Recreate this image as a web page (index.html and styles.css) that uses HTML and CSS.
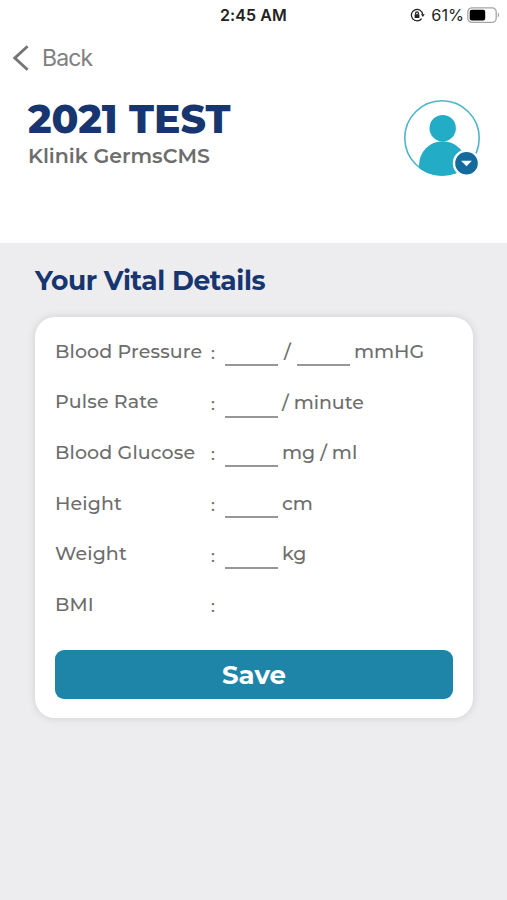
FILE: index.html
```html
<!DOCTYPE html>
<html lang="en">
<head>
<meta charset="utf-8">
<meta name="viewport" content="width=device-width, initial-scale=1">
<title>Your Vital Details</title>
<link rel="stylesheet" href="styles.css">
</head>
<body>
<header class="top">
  <div class="status">
    <span class="time">2:45 AM</span>
    <div class="indicators">
      <svg class="lock" width="16" height="14" viewBox="0 0 16 14" fill="none" stroke="#222" stroke-width="1.3">
        <path d="M11.6 10.6A5.7 5.7 0 1 1 12.7 6.6"/>
        <path d="M11 6.3h3.8l-1.9 2.6z" fill="#222" stroke="none"/>
        <rect x="4.6" y="6.3" width="4.8" height="3.8" rx=".5" fill="#222" stroke="none"/>
        <path d="M5.6 6.5V5.2a1.4 1.4 0 0 1 2.8 0v1.3"/>
      </svg>
      <span class="percent">61%</span>
      <svg class="battery" width="33" height="17" viewBox="0 0 33 17">
        <rect x=".8" y=".8" width="28.4" height="14.6" rx="4.2" fill="#fff" stroke="#a6a6a6" stroke-width="1.3"/>
        <rect x="2.7" y="2.8" width="15.5" height="10.6" rx="2" fill="#000"/>
        <path d="M30.8 5.6c1.7.7 1.7 4.2 0 4.9z" fill="#a6a6a6"/>
      </svg>
    </div>
  </div>
  <nav class="back">
    <svg width="17" height="28" viewBox="0 0 17 28" fill="none" stroke="#757575" stroke-width="2.9"><path d="M15.6 2.2 2.8 14l12.8 11.8"/></svg>
    <span>Back</span>
  </nav>
  <div class="profile">
    <div class="names">
      <h1>2021 TEST</h1>
      <p>Klinik GermsCMS</p>
    </div>
    <svg class="avatar" width="78" height="78" viewBox="0 0 78 78">
      <defs><clipPath id="ring"><circle cx="39" cy="39" r="37.8"/></clipPath></defs>
      <circle cx="39" cy="39" r="37.2" fill="#fff" stroke="#4fb5cb" stroke-width="1.6"/>
      <circle cx="39.7" cy="29.2" r="13.2" fill="#22acc6"/>
      <path clip-path="url(#ring)" d="M16 78V66a23.7 23.7 0 0 1 47.4 0v12z" fill="#22acc6"/>
      <circle cx="63.5" cy="64.3" r="12.5" fill="#126b9b" stroke="#fff" stroke-width="2.4"/>
      <path d="M58.1 61.8h10.8L63.5 67.3z" fill="#fff"/>
    </svg>
  </div>
</header>
<main>
  <h2>Your Vital Details</h2>
  <section class="card">
    <div class="row"><span class="label">Blood Pressure</span><span class="colon">:</span><i class="blank"></i><span class="slash">/</span><i class="blank"></i><span class="unit">mmHG</span></div>
    <div class="row low"><span class="label">Pulse Rate</span><span class="colon">:</span><i class="blank"></i><span class="unit">/ minute</span></div>
    <div class="row"><span class="label">Blood Glucose</span><span class="colon">:</span><i class="blank"></i><span class="unit">mg / ml</span></div>
    <div class="row"><span class="label">Height</span><span class="colon">:</span><i class="blank"></i><span class="unit">cm</span></div>
    <div class="row"><span class="label">Weight</span><span class="colon">:</span><i class="blank"></i><span class="unit">kg</span></div>
    <div class="row"><span class="label">BMI</span><span class="colon">:</span></div>
    <button class="save" type="button">Save</button>
  </section>
</main>
</body>
</html>
```

FILE: styles.css
```css
* { box-sizing: border-box; }
body {
  margin: 0;
  min-height: 900px;
  background: #ededef;
  color: #6d6d6d;
  font-family: Montserrat, Inter, "Liberation Sans", sans-serif;
}
h1, h2, p { margin: 0; white-space: nowrap; }
.top { height: 243px; background: #fff; }
.status {
  height: 30px;
  display: grid;
  grid-template-columns: 1fr auto 1fr;
  align-items: center;
  color: #222;
  font-family: Inter, sans-serif;
}
.time { grid-column: 2; font-size: 16px; font-weight: 600; letter-spacing: .1px; }
.indicators { display: flex; align-items: center; justify-content: flex-end; padding-right: 7px; }
.percent { margin: 0 3px 0 5px; font-size: 16.3px; }
.back {
  display: flex;
  align-items: center;
  height: 56px;
  padding-left: 12px;
  gap: 13px;
  color: #808080;
  font-family: Inter, sans-serif;
  font-size: 23px;
  letter-spacing: -.9px;
}
.profile { display: flex; justify-content: space-between; padding: 13px 26px 0 28px; }
.names { padding-top: 1px; }
h1 { font-size: 39.3px; line-height: 38px; font-weight: 800; color: #17356f; }
p { font-size: 20.5px; line-height: 24px; margin-top: 6px; font-weight: 600; }
main { padding: 21px 34px 0 35px; }
h2 { font-size: 26.5px; line-height: 34px; font-weight: 700; letter-spacing: -.4px; color: #17356f; }
.card {
  margin-top: 19px;
  height: 401px;
  padding: 9px 20px 0;
  border-radius: 20px;
  background: #fff;
  box-shadow: 0 0 8px rgba(0, 0, 0, .13);
}
.row { display: flex; align-items: center; height: 50.6px; font-size: 19px; font-weight: 500; white-space: nowrap; }
.label { width: 156px; font-weight: 550; letter-spacing: .12px; }
.colon { width: 14px; padding-top: 4px; font-size: 17px; }
.blank { width: 53px; height: 30px; border-bottom: 2px solid #979797; }
.slash { width: 19px; padding-left: 6px; }
.unit { margin-left: 4px; font-weight: 550; letter-spacing: -.05px; }
.low .blank, .low .unit { margin-top: 2px; }
.save {
  display: block;
  width: 398px;
  height: 49px;
  margin-top: 20px;
  padding: 1px 0 0;
  border: 0;
  border-radius: 9px;
  background: #1e85a9;
  color: #fff;
  font: inherit;
  font-size: 26px;
  font-weight: 700;
}
```
